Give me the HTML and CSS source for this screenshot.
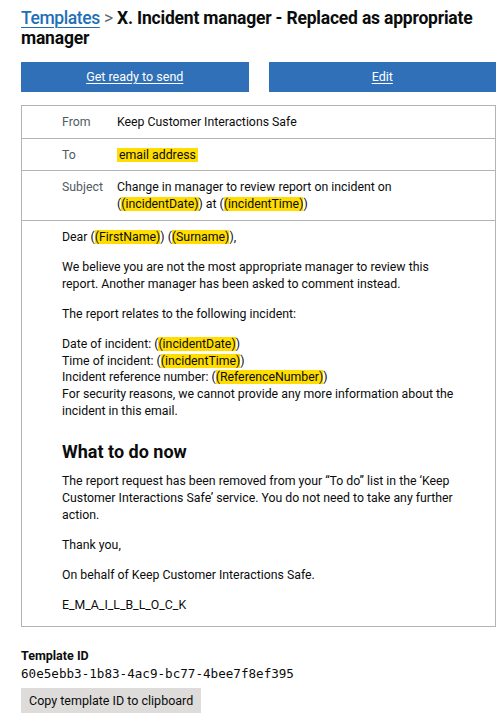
FILE: index.html
```html
<!DOCTYPE html>
<html lang="en">
<head>
<meta charset="utf-8">
<title>Template</title>
<link rel="stylesheet" href="styles.css">
</head>
<body>
<main class="page">
  <h1 class="title"><a class="crumb" href="#">Templates</a> <span class="sep">&gt;</span> X. Incident manager - Replaced as appropriate manager</h1>
  <div class="actions">
    <a class="btn" href="#">Get ready to send</a>
    <a class="btn" href="#">Edit</a>
  </div>
  <div class="preview">
    <div class="meta-row"><div class="meta-label">From</div><div class="meta-value">Keep Customer Interactions Safe</div></div>
    <div class="meta-row"><div class="meta-label">To</div><div class="meta-value"><span class="hl hl-pad">email address</span></div></div>
    <div class="meta-row"><div class="meta-label">Subject</div><div class="meta-value">Change in manager to review report on incident on (<span class="hl">(incidentDate)</span>) at (<span class="hl">(incidentTime)</span>)</div></div>
    <div class="body">
      <p>Dear (<span class="hl">(FirstName)</span>) (<span class="hl">(Surname)</span>),</p>
      <p>We believe you are not the most appropriate manager to review this report. Another manager has been asked to comment instead.</p>
      <p>The report relates to the following incident:</p>
      <p>Date of incident: (<span class="hl">(incidentDate)</span>)<br>Time of incident: (<span class="hl">(incidentTime)</span>)<br>Incident reference number: (<span class="hl">(ReferenceNumber)</span>)<br>For security reasons, we cannot provide any more information about the incident in this email.</p>
      <h2 class="sub">What to do now</h2>
      <p>The report request has been removed from your “To do” list in the ‘Keep Customer Interactions Safe’ service. You do not need to take any further action.</p>
      <p>Thank you,</p>
      <p>On behalf of Keep Customer Interactions Safe.</p>
      <p>E_M_A_I_L_B_L_O_C_K</p>
    </div>
  </div>
  <h3 class="id-label">Template ID</h3>
  <div class="id-value">60e5ebb3-1b83-4ac9-bc77-4bee7f8ef395</div>
  <button class="copy" type="button">Copy template ID to clipboard</button>
</main>
</body>
</html>
```
FILE: styles.css
```css
html, body { margin: 0; padding: 0; background: #fff; }
body { font-family: Roboto, "Liberation Sans", sans-serif; color: #0b0c0c; }
.page { padding: 8px 7px 0 21px; }
.title { margin: 0; font-size: 17.5px; line-height: 20px; font-weight: 700; letter-spacing: -0.2px; }
.crumb { color: #1d70b8; text-decoration: underline; text-underline-offset: 3px; text-decoration-thickness: 1px; font-weight: 500; letter-spacing: -0.4px; }
.sep { color: #626a6e; font-weight: 400; }
.actions { display: grid; grid-template-columns: 1fr 1fr; gap: 20px; margin-top: 14px; }
.btn { display: block; height: 30px; line-height: 30px; background: #2f70b8; color: #fff; text-align: center; font-size: 12.5px; text-underline-offset: 2px; }
.preview { margin-top: 13px; border: 1px solid #b1b4b6; font-size: 12.3px; line-height: 16.7px; }
.meta-row { display: flex; border-bottom: 1px solid #b1b4b6; padding: 8px 0 7px 40px; }
.meta-label { width: 55px; color: #505a5f; flex: none; }
.meta-value { flex: 1; padding-right: 60px; }
.hl { background: #ffdd00; }
.hl-pad { padding: 0 2px; }
.body { padding: 8px 40px 12px 40px; }
.body p { margin: 0 0 13.4px; }
.body p:last-child { margin-bottom: 0; }
.sub { margin: 22px 0 10px; font-size: 18px; line-height: 22px; font-weight: 700; }
.id-label { margin: 20px 0 0; font-size: 12.5px; line-height: 18px; font-weight: 700; }
.id-value { font-family: "DejaVu Sans Mono", monospace; font-size: 12.6px; line-height: 18px; }
.copy { display: block; margin-top: 5px; font-family: inherit; font-size: 12.5px; color: #0b0c0c; background: #dedcda; border: none; box-shadow: 0 2px 0 #929191; padding: 0 8px; height: 25px; }
```
